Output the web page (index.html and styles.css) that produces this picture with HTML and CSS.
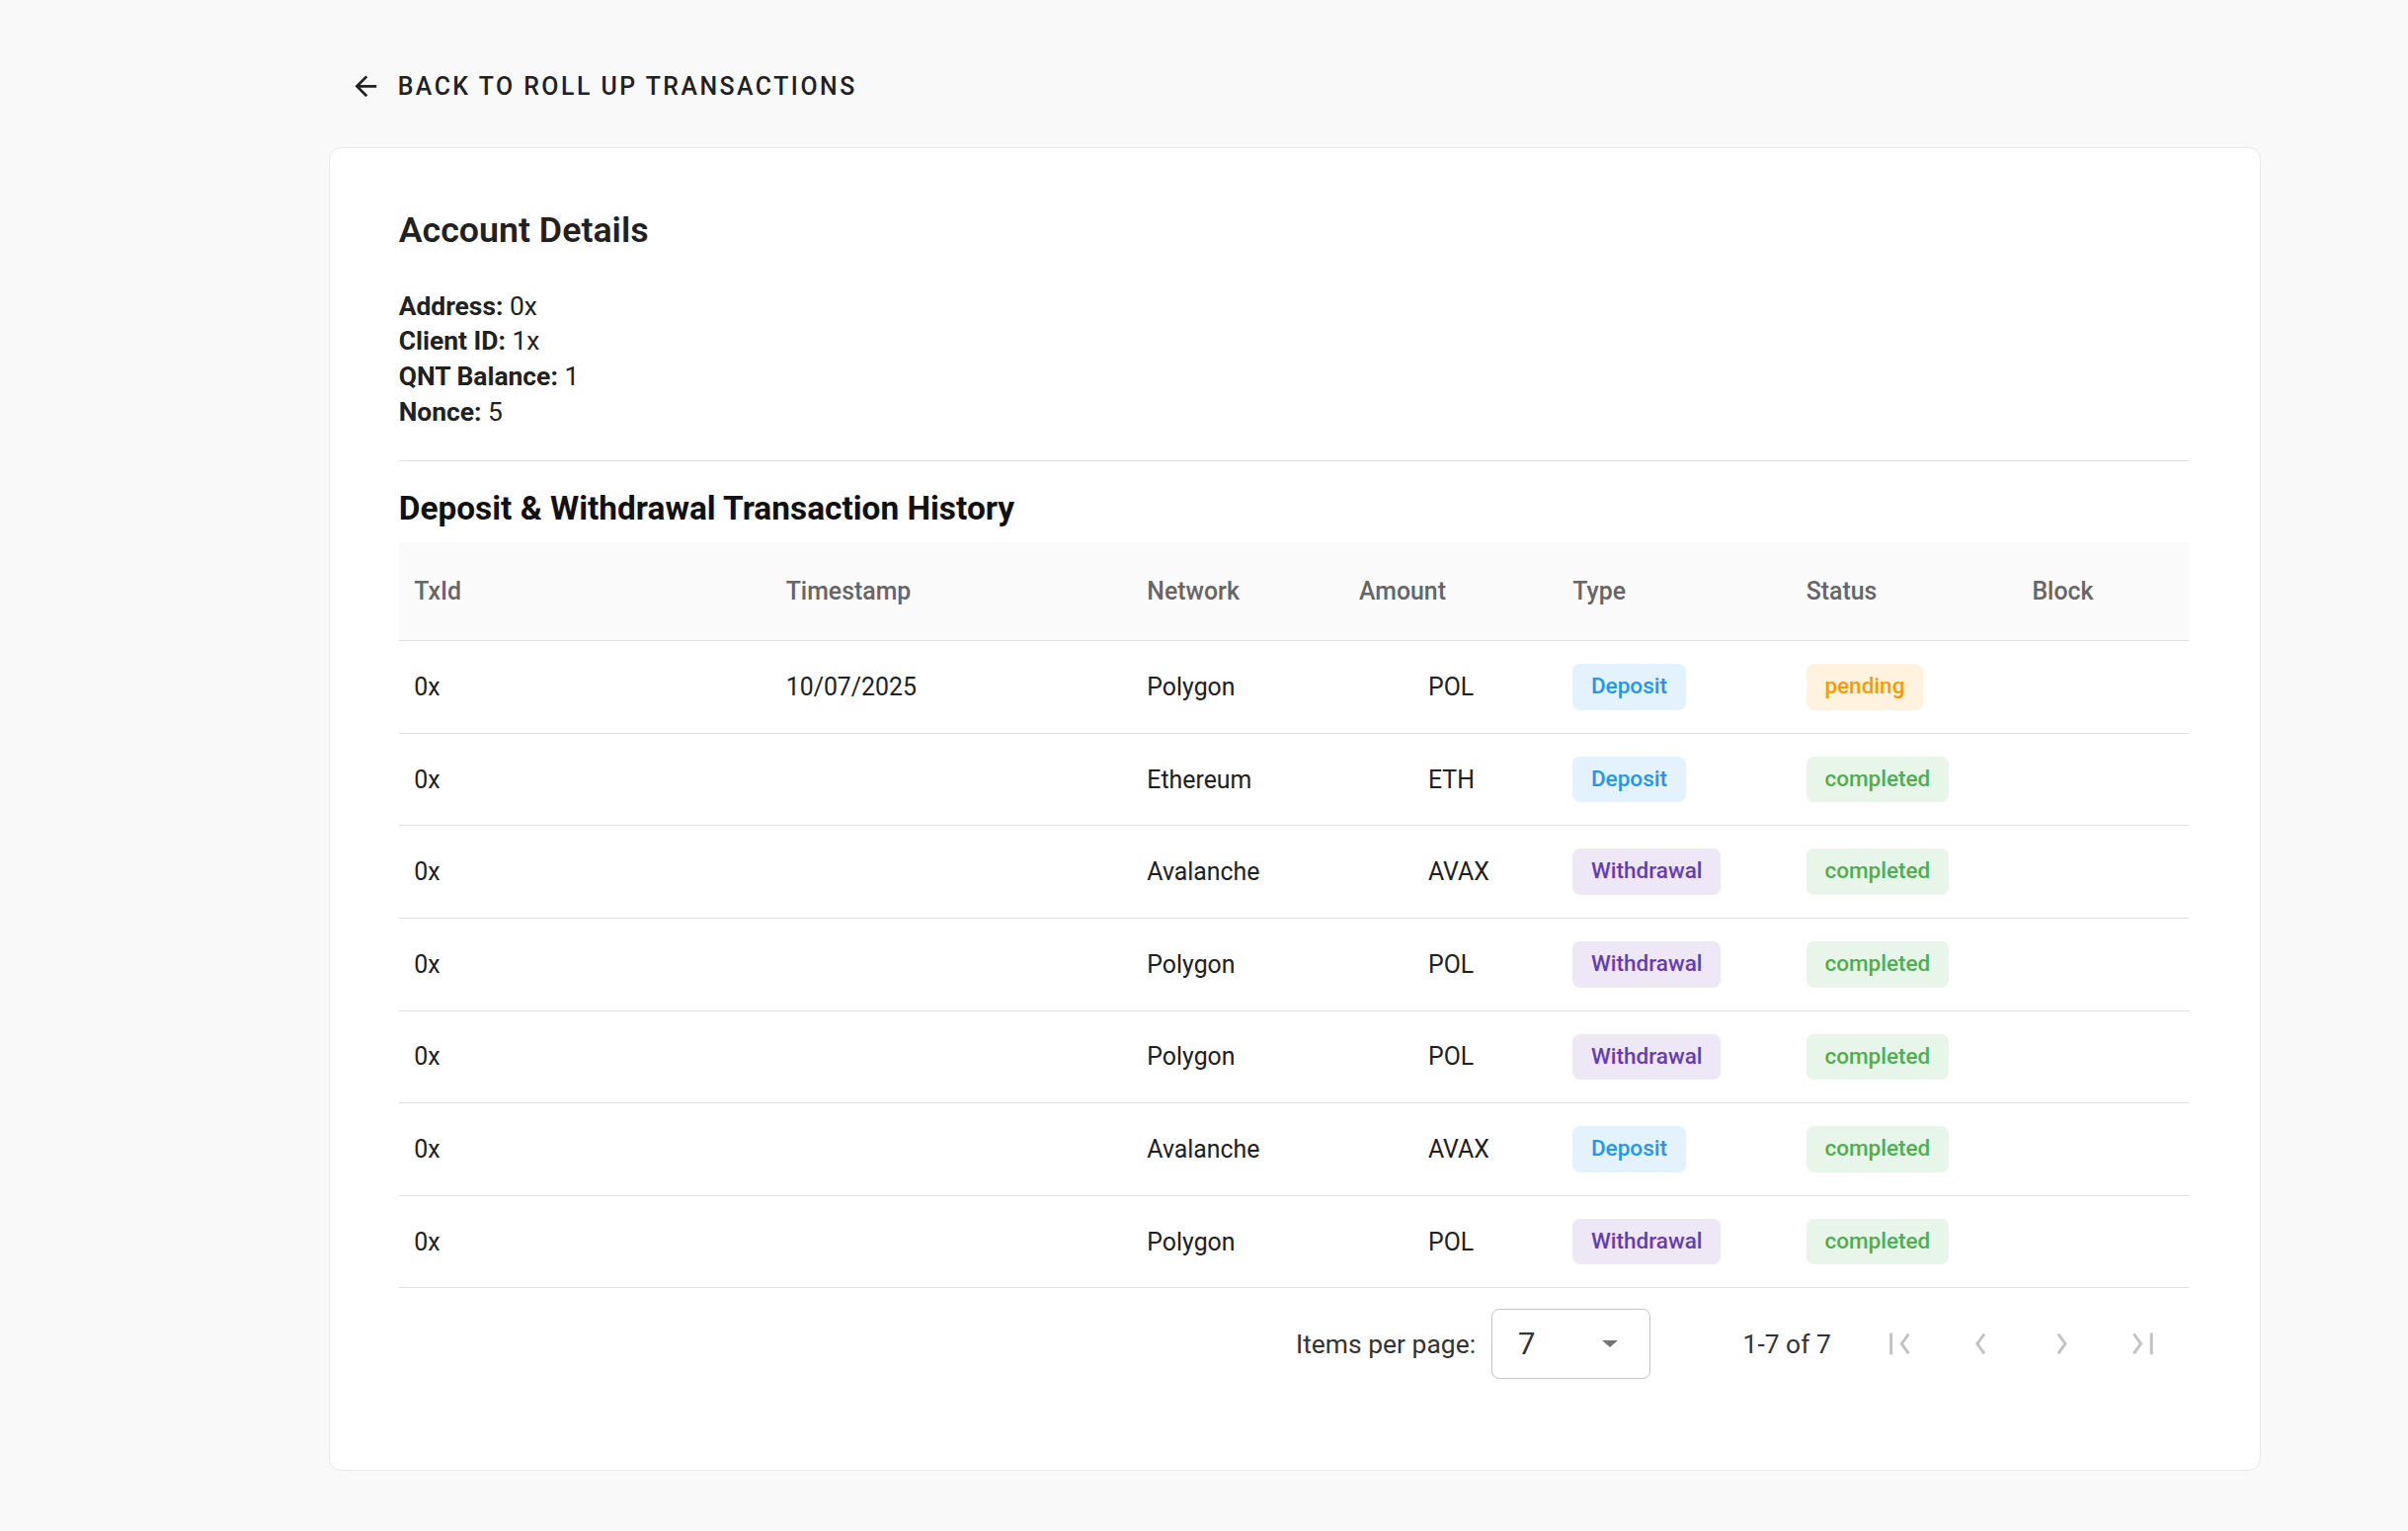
FILE: index.html
```html
<!DOCTYPE html>
<html lang="en">
<head>
    <meta charset="UTF-8">
    <meta name="viewport" content="width=device-width, initial-scale=1.0">
    <title>Account Details - Roll Up Transactions</title>
    <link rel="stylesheet" href="styles.css">
</head>
<body>
    <div class="page">
        <a href="#" class="back-link">
            <svg class="back-icon" viewBox="0 0 24 24"><path d="M20 11H7.83l5.59-5.59L12 4l-8 8 8 8 1.41-1.41L7.83 13H20v-2z"/></svg>
            <span>Back to Roll Up Transactions</span>
        </a>

        <div class="card">
            <h2 class="card-title">Account Details</h2>
            <div class="details">
                <p><strong>Address:</strong> 0x</p>
                <p><strong>Client ID:</strong> 1x</p>
                <p><strong>QNT Balance:</strong> 1</p>
                <p><strong>Nonce:</strong> 5</p>
            </div>

            <hr class="divider">

            <h3 class="section-title">Deposit &amp; Withdrawal Transaction History</h3>

            <table class="tx-table">
                <colgroup>
                    <col style="width: 242px">
                    <col style="width: 235px">
                    <col style="width: 138px">
                    <col style="width: 139px">
                    <col style="width: 152px">
                    <col style="width: 147px">
                    <col style="width: 112px">
                </colgroup>
                <thead>
                    <tr>
                        <th>TxId</th>
                        <th>Timestamp</th>
                        <th>Network</th>
                        <th>Amount</th>
                        <th>Type</th>
                        <th>Status</th>
                        <th>Block</th>
                    </tr>
                </thead>
                <tbody>
                    <tr>
                        <td>0x</td>
                        <td>10/07/2025</td>
                        <td>Polygon</td>
                        <td class="amount">POL</td>
                        <td><span class="badge badge-deposit">Deposit</span></td>
                        <td><span class="badge badge-pending">pending</span></td>
                        <td></td>
                    </tr>
                    <tr>
                        <td>0x</td>
                        <td></td>
                        <td>Ethereum</td>
                        <td class="amount">ETH</td>
                        <td><span class="badge badge-deposit">Deposit</span></td>
                        <td><span class="badge badge-completed">completed</span></td>
                        <td></td>
                    </tr>
                    <tr>
                        <td>0x</td>
                        <td></td>
                        <td>Avalanche</td>
                        <td class="amount">AVAX</td>
                        <td><span class="badge badge-withdrawal">Withdrawal</span></td>
                        <td><span class="badge badge-completed">completed</span></td>
                        <td></td>
                    </tr>
                    <tr>
                        <td>0x</td>
                        <td></td>
                        <td>Polygon</td>
                        <td class="amount">POL</td>
                        <td><span class="badge badge-withdrawal">Withdrawal</span></td>
                        <td><span class="badge badge-completed">completed</span></td>
                        <td></td>
                    </tr>
                    <tr>
                        <td>0x</td>
                        <td></td>
                        <td>Polygon</td>
                        <td class="amount">POL</td>
                        <td><span class="badge badge-withdrawal">Withdrawal</span></td>
                        <td><span class="badge badge-completed">completed</span></td>
                        <td></td>
                    </tr>
                    <tr>
                        <td>0x</td>
                        <td></td>
                        <td>Avalanche</td>
                        <td class="amount">AVAX</td>
                        <td><span class="badge badge-deposit">Deposit</span></td>
                        <td><span class="badge badge-completed">completed</span></td>
                        <td></td>
                    </tr>
                    <tr>
                        <td>0x</td>
                        <td></td>
                        <td>Polygon</td>
                        <td class="amount">POL</td>
                        <td><span class="badge badge-withdrawal">Withdrawal</span></td>
                        <td><span class="badge badge-completed">completed</span></td>
                        <td></td>
                    </tr>
                </tbody>
            </table>

            <div class="paginator">
                <span class="page-label">Items per page:</span>
                <div class="page-select">
                    <span>7</span>
                    <span class="select-arrow"></span>
                </div>
                <span class="page-range">1-7 of 7</span>
                <div class="page-nav">
                    <button class="nav-btn" disabled>
                        <svg viewBox="0 0 16 16"><rect x="1.4" y="1" width="1.9" height="14"/><polyline points="13.8,1.6 9.2,8 13.8,14.4"/></svg>
                    </button>
                    <button class="nav-btn" disabled>
                        <svg viewBox="0 0 16 16"><polyline points="10.3,1.6 5.7,8 10.3,14.4"/></svg>
                    </button>
                    <button class="nav-btn" disabled>
                        <svg viewBox="0 0 16 16"><polyline points="5.7,1.6 10.3,8 5.7,14.4"/></svg>
                    </button>
                    <button class="nav-btn" disabled>
                        <svg viewBox="0 0 16 16"><polyline points="2.2,1.6 6.8,8 2.2,14.4"/><rect x="12.7" y="1" width="1.9" height="14"/></svg>
                    </button>
                </div>
            </div>
        </div>
    </div>
</body>
</html>
```

FILE: styles.css
```css
:root {
    --text: #212121;
    --muted: #666666;
    --line: #e0e0e0;
    --page-bg: #f9f9f9;
    --white: #ffffff;
}

/* the layout was built at 1568px wide, scaled up to the screen */
html {
    zoom: 1.5548;
    background-color: var(--page-bg);
}

* {
    box-sizing: border-box;
}

body {
    margin: 0;
    font-family: Roboto, 'Liberation Sans', Arial, sans-serif;
    font-size: 16px;
    color: var(--text);
    background-color: var(--page-bg);
}

.page {
    width: 1258px;
    margin-left: 214px;
    padding: 38px 0 40px;
}

.back-link {
    display: inline-flex;
    align-items: center;
    gap: 10px;
    height: 36px;
    padding: 0 16px 0 14px;
    color: var(--text);
    text-decoration: none;
    text-transform: uppercase;
    letter-spacing: 1.6px;
    font-weight: 500;
    font-size: 16px;
}

.back-icon {
    width: 21px;
    height: 21px;
    fill: var(--text);
}

.card {
    margin-top: 22px;
    background-color: var(--white);
    border: 1px solid #e8e8e8;
    border-radius: 8px;
    padding: 38px 46px 46px 45px;
}

.card-title {
    margin: 0 0 21px;
    font-size: 23px;
    line-height: 32px;
    font-weight: 600;
    color: var(--text);
}

.details p {
    margin: 0;
    font-size: 17px;
    line-height: 23px;
}

.details strong {
    font-weight: 700;
}

.divider {
    margin: 20px 0 17px;
    border: 0;
    border-top: 1px solid var(--line);
}

.section-title {
    margin: 0 0 8px;
    font-size: 21.5px;
    line-height: 28px;
    font-weight: 700;
    color: #111111;
}

.tx-table {
    width: 100%;
    table-layout: fixed;
    border-collapse: collapse;
}

.tx-table th,
.tx-table td {
    padding: 0 10px;
    text-align: left;
    vertical-align: middle;
    border-bottom: 1px solid var(--line);
}

.tx-table th {
    height: 64px;
    background-color: #fafafa;
    color: var(--muted);
    font-weight: 500;
}

.tx-table td {
    height: 60.2px;
}

/* amount value is masked, only the currency shows */
.tx-table td.amount {
    padding-left: 55px;
}

.badge {
    display: inline-block;
    height: 30px;
    line-height: 30px;
    padding: 0 12px;
    border-radius: 5px;
    font-size: 14.5px;
    font-weight: 500;
}

.badge-deposit {
    color: #2196f3;
    background-color: #e3f2fd;
}

.badge-withdrawal {
    color: #673ab7;
    background-color: #ede7f6;
}

.badge-pending {
    color: #ff9800;
    background-color: #fff3e0;
}

.badge-completed {
    color: #4caf50;
    background-color: #e8f5e9;
}

.paginator {
    display: flex;
    align-items: center;
    justify-content: flex-end;
    height: 72px;
    padding-right: 10px;
    font-size: 17px;
    color: #333333;
}

.page-label {
    margin-right: 10px;
}

.page-select {
    display: flex;
    align-items: center;
    justify-content: space-between;
    width: 104px;
    height: 46px;
    padding: 0 21px 0 17px;
    border: 1px solid #c4c4c4;
    border-radius: 5px;
    font-size: 20px;
}

.select-arrow {
    width: 0;
    height: 0;
    border-left: 5.5px solid transparent;
    border-right: 5.5px solid transparent;
    border-top: 5px solid #757575;
}

.page-range {
    margin: 0 25px 0 60px;
}

.page-nav {
    display: flex;
    gap: 12.7px;
}

.nav-btn {
    display: flex;
    align-items: center;
    justify-content: center;
    width: 40px;
    height: 40px;
    padding: 0;
    border: 0;
    background: none;
}

.nav-btn svg {
    width: 16px;
    height: 16px;
    fill: #c2c2c2;
    stroke: #c2c2c2;
}

.nav-btn polyline {
    fill: none;
    stroke-width: 1.9;
}

.nav-btn rect {
    stroke: none;
}
```
